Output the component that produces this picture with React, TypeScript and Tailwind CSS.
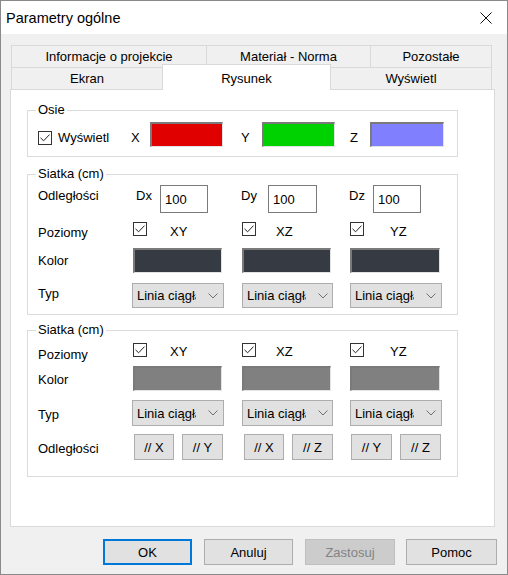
import React from "react";

const Check = () => (
  <span className="w-[14px] h-[14px] border border-[#333333] bg-white flex items-center justify-center shrink-0">
    <svg width="10" height="8" viewBox="0 0 10 8">
      <path d="M0.5 3.8 L3.6 6.8 L9.5 0.6" fill="none" stroke="#222222" strokeWidth="1" />
    </svg>
  </span>
);

const swatchColors: Record<string, string> = {
  red: "bg-[#e00000]",
  green: "bg-[#00d100]",
  blue: "bg-[#8080ff]",
  dark: "bg-[#363a43]",
  gray: "bg-[#808080]",
};

const Swatch = ({ color, w }: { color: string; w: string }) => (
  <div
    className={`${w} h-[25px] shrink-0 border-t-2 border-l-2 border-r border-b border-t-[#7a7a7a] border-l-[#7a7a7a] border-r-[#e3e3e3] border-b-[#e3e3e3] ${swatchColors[color]}`}
  />
);

const Select = ({ w, h }: { w: string; h: string }) => (
  <div className={`${w} ${h} shrink-0 bg-[#e1e1e1] border border-[#adadad] flex items-center pl-[4px]`}>
    <span className="w-[59px] overflow-hidden whitespace-nowrap leading-[15px]">Linia ciągła</span>
    <svg className="ml-[12px]" width="10" height="6" viewBox="0 0 10 6">
      <path d="M0.5 0.5 L5 5 L9.5 0.5" fill="none" stroke="#707070" strokeWidth="1" />
    </svg>
  </div>
);

const SmallBtn = ({ label, w }: { label: string; w: string }) => (
  <button className={`${w} h-[26px] shrink-0 bg-[#e1e1e1] border border-[#adadad] flex items-center justify-center leading-[15px]`}>
    {label}
  </button>
);

const Input = ({ w }: { w: string }) => (
  <div className={`${w} h-[28px] shrink-0 bg-white border border-[#7a7a7a] flex items-center pl-[4px] leading-[15px]`}>
    100
  </div>
);

export default function App() {
  return (
    <div className="w-[508px] h-[575px] flex flex-col border border-[#8a8a8a] bg-[#f0f0f0] text-[13px] text-black font-['Liberation_Sans',Arial,sans-serif]">
      {/* title bar */}
      <div className="h-[33px] bg-white flex items-center justify-between pl-[5px] pr-[15px]">
        <span className="text-[14.5px] leading-[18px]">Parametry ogólne</span>
        <svg width="12" height="12" viewBox="0 0 12 12">
          <path d="M0.5 0.5 L11.5 11.5 M11.5 0.5 L0.5 11.5" stroke="#111111" strokeWidth="1" />
        </svg>
      </div>

      <div className="flex flex-col pl-[9px] pt-[11px]">
        {/* tabs */}
        <div className="flex ml-[1px] h-[22px]">
          <div className="w-[195px] border-t border-l border-[#d9d9d9] flex items-center justify-center">Informacje o projekcie</div>
          <div className="w-[164px] border-t border-l border-[#d9d9d9] flex items-center justify-center">Materiał - Norma</div>
          <div className="w-[122px] border-t border-l border-r border-[#d9d9d9] flex items-center justify-center">Pozostałe</div>
        </div>
        <div className="flex items-end ml-[1px] h-[22px]">
          <div className="w-[151px] h-[22px] border-t border-l border-[#d9d9d9] flex items-center justify-center">Ekran</div>
          <div className="relative z-10 w-[169px] h-[26px] -mb-[1px] bg-white border-t border-l border-r border-[#d9d9d9] flex items-start justify-center pt-[4px]">
            Rysunek
          </div>
          <div className="w-[161px] h-[22px] border-t border-r border-[#d9d9d9] flex items-center justify-center">Wyświetl</div>
        </div>

        {/* panel */}
        <div className="w-[485px] h-[438px] bg-white border border-[#d9d9d9] pl-[16px] pt-[12px]">
          {/* Osie */}
          <fieldset className="w-[431px] border border-[#dcdcdc] pl-[10px] pb-[9px]">
            <legend className="-ml-[2px] px-[2px] leading-[16px]">Osie</legend>
            <div className="flex items-center h-[25px] mt-[4px]">
              <div className="w-[93px] flex items-center mt-[6px]">
                <Check />
                <span className="ml-[6px] leading-[15px]">Wyświetl</span>
              </div>
              <span className="w-[19px] leading-[15px] mt-[6px]">X</span>
              <Swatch color="red" w="w-[73px]" />
              <span className="w-[39px] pl-[18px] leading-[15px] mt-[6px]">Y</span>
              <Swatch color="green" w="w-[73px]" />
              <span className="w-[35px] pl-[15px] leading-[15px] mt-[6px]">Z</span>
              <Swatch color="blue" w="w-[74px]" />
            </div>
          </fieldset>

          {/* Siatka 1 */}
          <fieldset className="w-[431px] mt-[9px] border border-[#dcdcdc] pl-[10px] pb-[6px]">
            <legend className="-ml-[2px] px-[2px] leading-[16px]">Siatka (cm)</legend>
            <div className="flex items-center h-[28px] mt-[3px]">
              <span className="w-[94px] leading-[15px] mb-[8px]">Odległości</span>
              <div className="w-[110px] flex items-center">
                <span className="w-[28px] pl-[4px] leading-[15px] mb-[8px]">Dx</span>
                <Input w="w-[48px]" />
              </div>
              <div className="w-[108px] flex items-center -ml-[1px]">
                <span className="w-[27px] leading-[15px] mb-[8px]">Dy</span>
                <Input w="w-[49px]" />
              </div>
              <div className="flex items-center">
                <span className="w-[24px] leading-[15px] mb-[8px]">Dz</span>
                <Input w="w-[48px]" />
              </div>
            </div>
            <div className="flex items-center h-[24px] mt-[4px]">
              <span className="w-[94px] leading-[15px] mt-[6px]">Poziomy</span>
              <div className="w-[110px] flex items-center pl-[1px]">
                <Check />
                <span className="ml-[23px] leading-[15px] mt-[5px]">XY</span>
              </div>
              <div className="w-[108px] flex items-center">
                <Check />
                <span className="ml-[20px] leading-[15px] mt-[5px]">XZ</span>
              </div>
              <div className="flex items-center">
                <Check />
                <span className="ml-[26px] leading-[15px] mt-[5px]">YZ</span>
              </div>
            </div>
            <div className="flex items-center h-[25px] mt-[7px]">
              <span className="w-[94px] leading-[15px]">Kolor</span>
              <div className="w-[110px] pl-[1px]">
                <Swatch color="dark" w="w-[89px]" />
              </div>
              <div className="w-[108px]">
                <Swatch color="dark" w="w-[89px]" />
              </div>
              <Swatch color="dark" w="w-[90px]" />
            </div>
            <div className="flex items-center h-[25px] mt-[10px]">
              <span className="w-[94px] leading-[15px] mb-[4px]">Typ</span>
              <div className="w-[110px]">
                <Select w="w-[92px]" h="h-[25px]" />
              </div>
              <div className="w-[108px]">
                <Select w="w-[91px]" h="h-[25px]" />
              </div>
              <Select w="w-[92px]" h="h-[25px]" />
            </div>
          </fieldset>

          {/* Siatka 2 */}
          <fieldset className="w-[431px] mt-[7px] border border-[#dcdcdc] pl-[10px] pb-[16px]">
            <legend className="-ml-[2px] px-[2px] leading-[16px]">Siatka (cm)</legend>
            <div className="flex items-center h-[16px] mt-[4px]">
              <span className="w-[94px] leading-[15px] mt-[8px]">Poziomy</span>
              <div className="w-[110px] flex items-center pl-[1px]">
                <Check />
                <span className="ml-[23px] leading-[15px] mt-[3px]">XY</span>
              </div>
              <div className="w-[108px] flex items-center">
                <Check />
                <span className="ml-[20px] leading-[15px] mt-[3px]">XZ</span>
              </div>
              <div className="flex items-center">
                <Check />
                <span className="ml-[26px] leading-[15px] mt-[3px]">YZ</span>
              </div>
            </div>
            <div className="flex items-center h-[25px] mt-[8px]">
              <span className="w-[94px] leading-[15px] mt-[2px]">Kolor</span>
              <div className="w-[110px] pl-[1px]">
                <Swatch color="gray" w="w-[89px]" />
              </div>
              <div className="w-[108px]">
                <Swatch color="gray" w="w-[89px]" />
              </div>
              <Swatch color="gray" w="w-[90px]" />
            </div>
            <div className="flex items-center h-[26px] mt-[9px]">
              <span className="w-[94px] leading-[15px] mt-[3px]">Typ</span>
              <div className="w-[110px]">
                <Select w="w-[92px]" h="h-[26px]" />
              </div>
              <div className="w-[108px]">
                <Select w="w-[91px]" h="h-[26px]" />
              </div>
              <Select w="w-[92px]" h="h-[26px]" />
            </div>
            <div className="flex items-center h-[26px] mt-[8px]">
              <span className="w-[94px] leading-[15px] mt-[2px]">Odległości</span>
              <div className="w-[110px] flex pl-[2px]">
                <SmallBtn label="// X" w="w-[40px]" />
                <div className="ml-[8px]">
                  <SmallBtn label="// Y" w="w-[41px]" />
                </div>
              </div>
              <div className="w-[108px] flex pl-[2px]">
                <SmallBtn label="// X" w="w-[40px]" />
                <div className="ml-[8px]">
                  <SmallBtn label="// Z" w="w-[41px]" />
                </div>
              </div>
              <div className="flex pl-[1px]">
                <SmallBtn label="// Y" w="w-[41px]" />
                <div className="ml-[8px]">
                  <SmallBtn label="// Z" w="w-[41px]" />
                </div>
              </div>
            </div>
          </fieldset>
        </div>

        {/* bottom buttons */}
        <div className="flex mt-[12px] h-[26px]">
          <button className="ml-[93px] w-[89px] h-[26px] bg-[#e1e1e1] border-2 border-[#0078d7] leading-[15px]">OK</button>
          <button className="ml-[12px] w-[89px] h-[26px] bg-[#e1e1e1] border border-[#adadad] leading-[15px]">Anuluj</button>
          <button className="ml-[12px] w-[90px] h-[26px] bg-[#cccccc] border border-[#bfbfbf] text-[#838383] leading-[15px]">Zastosuj</button>
          <button className="ml-[11px] w-[91px] h-[26px] bg-[#e1e1e1] border border-[#adadad] leading-[15px]">Pomoc</button>
        </div>
      </div>
    </div>
  );
}
